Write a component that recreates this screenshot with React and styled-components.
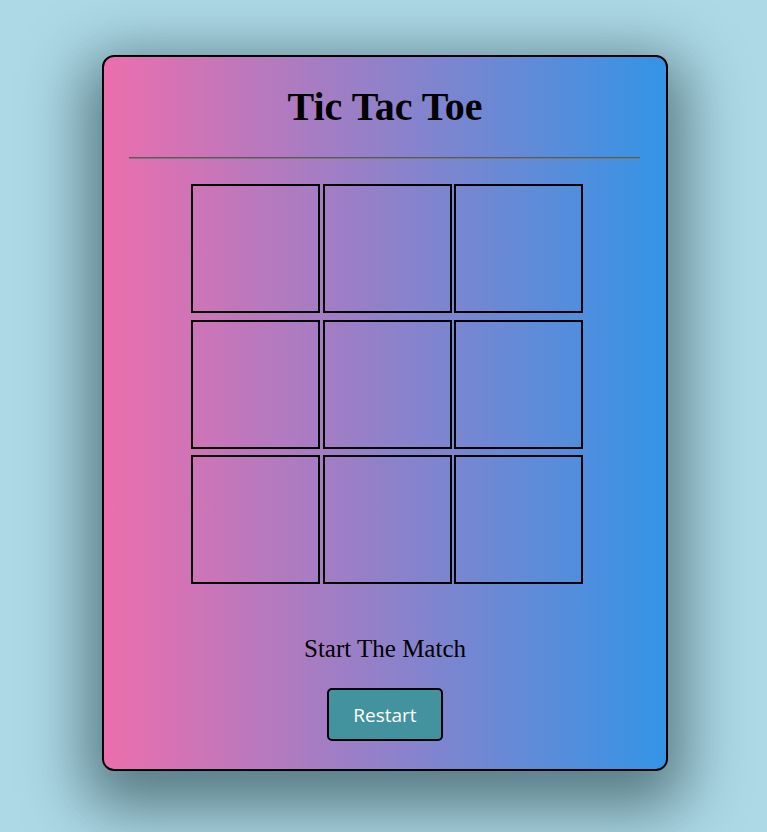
import React from "react";
import styled, { createGlobalStyle } from "styled-components";

const Global = createGlobalStyle`
  html, body { margin: 0; padding: 0; }
  body {
    background: #add8e6;
    font-family: "Liberation Serif", "Times New Roman", serif;
    min-height: 832px;
  }
`;

const Page = styled.main`
  display: flex;
  justify-content: center;
  padding: 55px 0 0 3px;
`;

const Card = styled.section`
  box-sizing: border-box;
  width: 566px;
  height: 716px;
  border: 2px solid #000;
  border-radius: 12px;
  background: linear-gradient(to right, #ec6ead, #3494e6);
  box-shadow: 0 20px 60px 18px rgba(20, 50, 55, 0.55);
  display: flex;
  flex-direction: column;
  align-items: center;
  padding-top: 27px;
`;

const Title = styled.h1`
  margin: 0;
  font-size: 40px;
  line-height: 46px;
  font-weight: bold;
  color: #000;
`;

const Rule = styled.hr`
  align-self: stretch;
  margin: 27px 26px 0 25px;
  border: none;
  border-top: 1px solid #5a5a5a;
  border-bottom: 1px solid #7a7a7a;
  height: 0;
`;

const Board = styled.div`
  margin: 25px 0 0 4px;
  display: grid;
  grid-template-columns: repeat(3, 129px);
  grid-auto-rows: 129px;
  column-gap: 2.5px;
  row-gap: 6.5px;
`;

const Cell = styled.button`
  box-sizing: border-box;
  width: 129px;
  height: 129px;
  border: 2px solid #000;
  background: transparent;
  padding: 0;
  cursor: pointer;
  font-family: inherit;
  font-size: 60px;
`;

const Status = styled.p`
  margin: 50px 0 0;
  font-size: 25px;
  line-height: 29px;
  color: #000;
`;

const Restart = styled.button`
  margin-top: 25px;
  box-sizing: border-box;
  width: 116px;
  height: 53px;
  background: #43939f;
  color: #fff;
  border: 2px solid #000;
  border-radius: 5px;
  font-family: "Open Sans", "Noto Sans", sans-serif;
  font-size: 19px;
  cursor: pointer;
`;

export default function App() {
  const cells = Array.from({ length: 9 }, (_, i) => i);
  return (
    <>
      <Global />
      <Page>
        <Card>
          <Title>Tic Tac Toe</Title>
          <Rule />
          <Board>
            {cells.map((i) => (
              <Cell key={i} aria-label={`cell ${i + 1}`} />
            ))}
          </Board>
          <Status>Start The Match</Status>
          <Restart>Restart</Restart>
        </Card>
      </Page>
    </>
  );
}
